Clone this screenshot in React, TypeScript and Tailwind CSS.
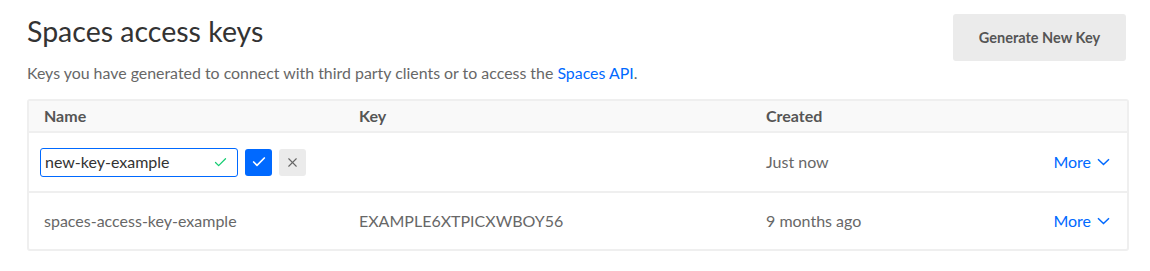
import { Check, X } from "lucide-react"

const rows = [
  { name: "spaces-access-key-example", key: "EXAMPLE6XTPICXWBOY56", created: "9 months ago" },
]

function More() {
  return (
    <a href="#" className="flex items-center gap-[6px] text-[#0069ff]">
      More
      <svg width="13" height="8" viewBox="0 0 13 8" fill="none" stroke="currentColor" strokeWidth="1.5">
        <path d="M1 1.2 L6.5 6.5 L12 1.2" />
      </svg>
    </a>
  )
}

export default function App() {
  return (
    <div className="w-[1150px] h-[271px] bg-white font-['Lato',sans-serif] text-[#4d4d4d]">
      <div className="px-[27px] pt-[14px]">
        {/* Header */}
        <div className="flex justify-between">
          <div>
            <h1 className="text-[28.5px] leading-[34px] text-[#333] font-normal">Spaces access keys</h1>
            <p className="mt-[15px] text-[15.9px] leading-[20px] text-[#676767]">
              Keys you have generated to connect with third party clients or to access the{" "}
              <a href="#" className="text-[#0069ff]">Spaces API</a>.
            </p>
          </div>
          <button className="w-[173px] h-[47px] mr-[-3px] rounded-[3px] bg-[#ebebeb] text-[14.5px] font-bold text-[#555]">
            Generate New Key
          </button>
        </div>

        {/* Table */}
        <div className="mt-[16px] w-[1102px] rounded-[3px] border-2 border-[#efefef] text-[16px]">
          <div className="grid grid-cols-[315px_407px_1fr] h-[32px] items-center bg-[#f9f9f9] border-b-2 border-[#efefef] px-[15px] font-bold text-[#555]">
            <div>Name</div>
            <div>Key</div>
            <div>Created</div>
          </div>

          <div className="grid grid-cols-[319px_407px_1fr] h-[60px] items-center border-b-2 border-[#efefef] pl-[11px] pr-[17px]">
            <div className="flex items-center gap-[7px]">
              <div className="flex items-center w-[198px] h-[29px] rounded-[3px] border border-[#0069ff] pl-[4px] pr-[9px]">
                <span className="flex-1 text-[#333]">new-key-example</span>
                <Check className="w-[15px] h-[15px] text-[#15cd72]" strokeWidth={2} />
              </div>
              <button className="w-[27px] h-[27px] rounded-[3px] bg-[#0069ff] flex items-center justify-center">
                <Check className="w-[16px] h-[16px] text-white" strokeWidth={2.5} />
              </button>
              <button className="w-[27px] h-[27px] rounded-[3px] bg-[#ebebeb] flex items-center justify-center">
                <X className="w-[15px] h-[15px] text-[#666]" strokeWidth={1.75} />
              </button>
            </div>
            <div />
            <div className="flex justify-between text-[#676767]">
              <span>Just now</span>
              <More />
            </div>
          </div>

          {rows.map((r) => (
            <div key={r.name} className="grid grid-cols-[315px_407px_1fr] h-[56px] items-center pl-[15px] pr-[17px] text-[#676767]">
              <div>{r.name}</div>
              <div>{r.key}</div>
              <div className="flex justify-between">
                <span>{r.created}</span>
                <More />
              </div>
            </div>
          ))}
        </div>
      </div>
    </div>
  )
}
